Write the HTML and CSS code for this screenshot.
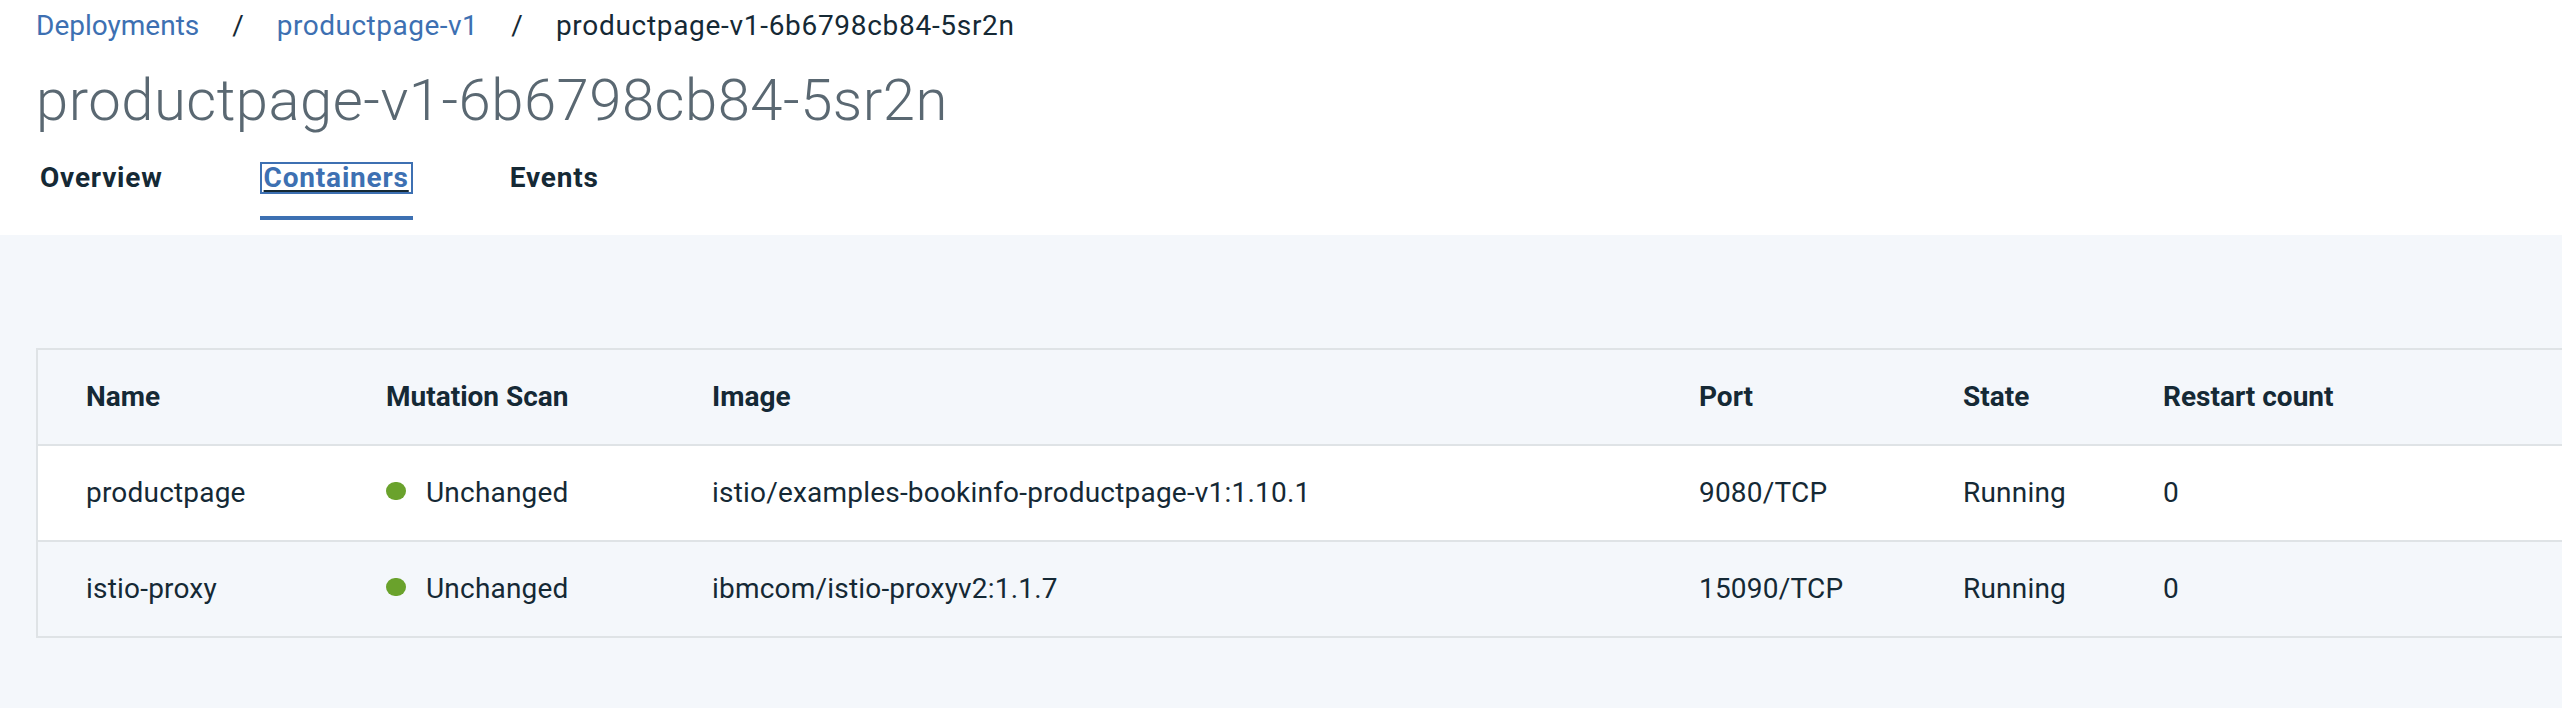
FILE: index.html
```html
<!DOCTYPE html>
<html lang="en">
<head>
<meta charset="utf-8">
<title>productpage-v1-6b6798cb84-5sr2n</title>
<link rel="stylesheet" href="styles.css">
</head>
<body>
<header class="page-header">
  <nav class="breadcrumb">
    <a class="crumb-link" href="#">Deployments</a>
    <span class="crumb-sep">/</span>
    <a class="crumb-link crumb-link-long" href="#">productpage-v1</a>
    <span class="crumb-sep">/</span>
    <span class="crumb-current">productpage-v1-6b6798cb84-5sr2n</span>
  </nav>
  <h1 class="page-title">productpage-v1-6b6798cb84-5sr2n</h1>
  <ul class="tabs">
    <li class="tab"><a class="tab-link" href="#">Overview</a></li>
    <li class="tab tab-active"><a class="tab-link" href="#">Containers</a></li>
    <li class="tab"><a class="tab-link" href="#">Events</a></li>
  </ul>
</header>
<main class="content">
  <table class="data-table">
    <colgroup>
      <col class="col-name">
      <col class="col-scan">
      <col class="col-image">
      <col class="col-port">
      <col class="col-state">
      <col class="col-restart">
    </colgroup>
    <thead>
      <tr>
        <th>Name</th>
        <th>Mutation Scan</th>
        <th>Image</th>
        <th>Port</th>
        <th>State</th>
        <th>Restart count</th>
      </tr>
    </thead>
    <tbody>
      <tr class="row-odd">
        <td>productpage</td>
        <td><div class="status"><span class="status-dot"></span><span>Unchanged</span></div></td>
        <td>istio/examples-bookinfo-productpage-v1:1.10.1</td>
        <td>9080/TCP</td>
        <td>Running</td>
        <td>0</td>
      </tr>
      <tr class="row-even">
        <td>istio-proxy</td>
        <td><div class="status"><span class="status-dot"></span><span>Unchanged</span></div></td>
        <td>ibmcom/istio-proxyv2:1.1.7</td>
        <td>15090/TCP</td>
        <td>Running</td>
        <td>0</td>
      </tr>
    </tbody>
  </table>
</main>
</body>
</html>
```

FILE: styles.css
```css
html, body {
  margin: 0;
  padding: 0;
  height: 100%;
}

body {
  font-family: Roboto, "Liberation Sans", Arial, sans-serif;
  color: #152935;
  background: #f4f7fb;
  overflow: hidden;
}

.page-header {
  background: #ffffff;
  padding: 10px 0 15px 36px;
}

.breadcrumb {
  display: flex;
  align-items: baseline;
  font-size: 28px;
  line-height: 32px;
}

.crumb-link {
  color: #3d70b2;
  text-decoration: none;
}

.crumb-link-long {
  letter-spacing: 0.5px;
}

.crumb-sep {
  color: #152935;
  margin: 0 33px;
}

.crumb-current {
  color: #152935;
  letter-spacing: 0.7px;
}

.page-title {
  margin: 24px 0 0 0;
  font-size: 58px;
  line-height: 68px;
  font-weight: 300;
  letter-spacing: 0.5px;
  color: #5a6872;
}

.tabs {
  list-style: none;
  margin: 28px 0 0 0;
  padding: 0;
  display: flex;
  gap: 93px;
}

.tab {
  padding-bottom: 22px;
  border-bottom: 4px solid transparent;
}

.tab-link {
  display: block;
  padding: 0 4px;
  font-size: 28px;
  line-height: 32px;
  font-weight: 700;
  letter-spacing: 0.8px;
  color: #152935;
  text-decoration: none;
}

.tab-active {
  border-bottom-color: #3d70b2;
}

.tab-active .tab-link {
  color: #3d70b2;
  outline: 2px solid #3d70b2;
  outline-offset: -2px;
  text-decoration: underline;
  text-decoration-color: #152935;
  text-decoration-thickness: 2px;
  text-underline-offset: 3px;
}

.content {
  padding: 113px 0 0 36px;
}

.data-table {
  width: 100%;
  table-layout: fixed;
  border-collapse: separate;
  border-spacing: 0;
  border-top: 2px solid #dfe3e6;
  border-left: 2px solid #dfe3e6;
  font-size: 28px;
  line-height: 32px;
}

.col-name { width: 300px; }
.col-scan { width: 326px; }
.col-image { width: 987px; }
.col-port { width: 264px; }
.col-state { width: 200px; }

.data-table th,
.data-table td {
  height: 32px;
  text-align: left;
  vertical-align: middle;
  padding: 31px 0 31px 48px;
  border-bottom: 2px solid #dfe3e6;
  white-space: nowrap;
  color: #152935;
}

.data-table th {
  font-weight: 700;
  background: #f4f7fb;
}

.data-table td {
  font-weight: 400;
  letter-spacing: 0.2px;
}

.row-odd td {
  background: #ffffff;
}

.row-even td {
  background: #f4f7fb;
}

.status {
  display: flex;
  align-items: center;
  height: 32px;
}

.status-dot {
  flex: none;
  width: 20px;
  height: 18px;
  border-radius: 9px;
  background: #6aa22c;
  margin-right: 20px;
  margin-bottom: 4px;
}
```
